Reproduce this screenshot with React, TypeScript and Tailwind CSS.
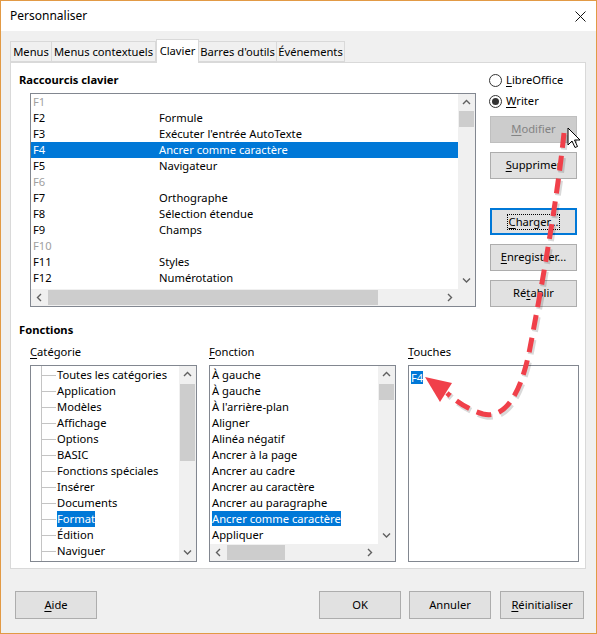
import React from 'react'

const Mn = ({ children }: { children: React.ReactNode }) => (
  <span className="underline underline-offset-[2px] decoration-1">{children}</span>
)

function Chevron({ dir }: { dir: 'up' | 'down' | 'left' | 'right' }) {
  const d = {
    up: 'M1 5 L4.5 1.5 L8 5',
    down: 'M1 1.5 L4.5 5 L8 1.5',
    left: 'M5 1 L1.5 4.5 L5 8',
    right: 'M2 1 L5.5 4.5 L2 8',
  }[dir]
  const wide = dir === 'up' || dir === 'down'
  return (
    <svg width={wide ? 9 : 7} height={wide ? 7 : 9} viewBox={wide ? '0 0 9 7' : '0 0 7 9'}>
      <path d={d} fill="none" stroke="#606060" strokeWidth="1.4" />
    </svg>
  )
}

function VScroll({ thumbTop, thumbH }: { thumbTop: number; thumbH: number }) {
  return (
    <div className="w-[17px] h-full bg-[#f0f0f0] flex flex-col shrink-0">
      <div className="h-[17px] flex items-center justify-center shrink-0"><Chevron dir="up" /></div>
      <div className="flex-1 relative">
        <div className="absolute left-px right-px bg-[#cdcdcd]" style={{ top: thumbTop, height: thumbH }} />
      </div>
      <div className="h-[17px] flex items-center justify-center shrink-0"><Chevron dir="down" /></div>
    </div>
  )
}

function HScroll({ thumbLeft, thumbW }: { thumbLeft: number; thumbW: number }) {
  return (
    <div className="h-[17px] w-full bg-[#f0f0f0] flex shrink-0">
      <div className="flex-1 flex">
        <div className="w-[17px] flex items-center justify-center shrink-0"><Chevron dir="left" /></div>
        <div className="flex-1 relative">
          <div className="absolute top-px bottom-px bg-[#cdcdcd]" style={{ left: thumbLeft, width: thumbW }} />
        </div>
        <div className="w-[17px] flex items-center justify-center shrink-0"><Chevron dir="right" /></div>
      </div>
      <div className="w-[17px] shrink-0" />
    </div>
  )
}

function Btn({ children, w = 'w-[87px]', h = 'h-[27px]', disabled, focused }: { children: React.ReactNode; w?: string; h?: string; disabled?: boolean; focused?: boolean }) {
  return (
    <div
      className={`${w} ${h} flex items-center justify-center whitespace-nowrap border ${
        disabled
          ? 'bg-[#cccccc] border-[#bfbfbf] text-[#838383]'
          : focused
          ? 'bg-[#e1e1e1] border-[#0078d7] shadow-[inset_0_0_0_1px_#0078d7] text-black'
          : 'bg-[#e1e1e1] border-[#adadad] text-black'
      }`}
    >
      {focused ? <span className="outline outline-1 outline-dotted outline-black px-px leading-[14px]">{children}</span> : children}
    </div>
  )
}

function Radio({ checked, children }: { checked?: boolean; children: React.ReactNode }) {
  return (
    <div className="h-[16px] flex items-center gap-[4px]">
      <div className="w-[13px] h-[13px] rounded-full border border-[#333] bg-white flex items-center justify-center">
        {checked && <div className="w-[7px] h-[7px] rounded-full bg-[#333]" />}
      </div>
      <span>{children}</span>
    </div>
  )
}

const shortcuts: [string, string, boolean?][] = [
  ['F1', '', true],
  ['F2', 'Formule'],
  ['F3', "Exécuter l'entrée AutoTexte"],
  ['F4', 'Ancrer comme caractère'],
  ['F5', 'Navigateur'],
  ['F6', '', true],
  ['F7', 'Orthographe'],
  ['F8', 'Sélection étendue'],
  ['F9', 'Champs'],
  ['F10', '', true],
  ['F11', 'Styles'],
  ['F12', 'Numérotation'],
  ['F13', ''],
]

const categories = [
  'Toutes les catégories',
  'Application',
  'Modèles',
  'Affichage',
  'Options',
  'BASIC',
  'Fonctions spéciales',
  'Insérer',
  'Documents',
  'Format',
  'Édition',
  'Naviguer',
]

const fonctions = [
  'À gauche',
  'À gauche',
  "À l'arrière-plan",
  'Aligner',
  'Alinéa négatif',
  'Ancrer à la page',
  'Ancrer au cadre',
  'Ancrer au caractère',
  'Ancrer au paragraphe',
  'Ancrer comme caractère',
  'Appliquer',
]

const tabs = [
  { label: 'Menus', w: 'w-[42px]' },
  { label: 'Menus contextuels', w: 'w-[105px]' },
  { label: 'Clavier', w: 'w-[43px]', active: true },
  { label: "Barres d'outils", w: 'w-[79px]' },
  { label: 'Événements', w: 'w-[69px]' },
]

export default function App() {
  return (
    <div className="relative w-[597px] h-[634px] bg-[#f0f0f0] border border-[#e29a45] flex flex-col text-black font-['Noto_Sans',sans-serif] text-[11.2px] overflow-hidden">
      {/* title bar */}
      <div className="h-[30px] bg-white flex items-center pl-[9px] pr-[10px] shrink-0">
        <span className="text-[12px]">Personnaliser</span>
        <svg className="ml-auto" width="11" height="11" viewBox="0 0 11 11">
          <path d="M0.5 0.5 L10.5 10.5 M10.5 0.5 L0.5 10.5" stroke="#111" strokeWidth="1" />
        </svg>
      </div>

      {/* tabs */}
      <div className="flex items-end pl-[9px] mt-[8px] h-[23px] shrink-0 relative z-10">
        {tabs.map((t) =>
          t.active ? (
            <div key={t.label} className={`${t.w} h-[24px] -mb-px bg-white border border-b-0 border-[#d9d9d9] flex items-center justify-center whitespace-nowrap`}>
              {t.label}
            </div>
          ) : (
            <div key={t.label} className={`${t.w} h-[21px] pt-[2px] bg-[#f0f0f0] border border-[#d9d9d9] -ml-px first:ml-0 flex items-center justify-center whitespace-nowrap`}>
              {t.label}
            </div>
          )
        )}
      </div>

      {/* panel */}
      <div className="ml-[9px] w-[576px] h-[507px] bg-white border border-[#d9d9d9] shrink-0 flex flex-col pt-[9px] pl-[8px]">
        <div className="flex">
          <div className="flex flex-col">
            <div className="h-[16px] leading-[16px] font-bold">Raccourcis clavier</div>
            <div className="ml-[11px] mt-[5px] w-[446px] h-[214px] border border-[#828790] bg-white flex flex-col">
              <div className="flex flex-1 min-h-0">
                <div className="flex-1 overflow-hidden">
                  {shortcuts.map(([k, f, dim]) => (
                    <div
                      key={k}
                      className={`h-[16px] leading-[16px] flex pl-[2px] whitespace-nowrap ${
                        k === 'F4' ? 'bg-[#0078d7] text-white' : dim ? 'text-[#a0a0a0]' : ''
                      }`}
                    >
                      <span className="w-[126px]">{k}</span>
                      <span>{f}</span>
                    </div>
                  ))}
                </div>
                <VScroll thumbTop={0} thumbH={16} />
              </div>
              <HScroll thumbLeft={0} thumbW={330} />
            </div>
          </div>
          <div className="ml-[13px] flex flex-col">
            <Radio><Mn>L</Mn>ibreOffice</Radio>
            <div className="mt-[5px]"><Radio checked><Mn>W</Mn>riter</Radio></div>
            <div className="mt-[7px] ml-px flex flex-col gap-[9px]">
              <Btn disabled><Mn>M</Mn>odifier</Btn>
              <Btn><Mn>S</Mn>upprimer</Btn>
              <div className="h-[11px]" />
              <Btn focused><Mn>C</Mn>harger...</Btn>
              <Btn><Mn>E</Mn>nregistrer...</Btn>
              <Btn>Ré<Mn>t</Mn>ablir</Btn>
            </div>
          </div>
        </div>

        <div className="mt-[15px] h-[16px] leading-[16px] font-bold">Fonctions</div>

        <div className="mt-[6px] ml-[11px] flex gap-[12px]">
          <div className="flex flex-col">
            <div className="h-[16px] leading-[16px]"><Mn>C</Mn>atégorie</div>
            <div className="mt-[5px] w-[167px] h-[197px] border border-[#828790] bg-white flex">
              <div className="flex-1 relative overflow-hidden pt-[1px]">
                <div className="absolute left-[10px] top-0 bottom-0 border-l border-[#c4c4c4]" />
                {categories.map((c) => (
                  <div key={c} className="h-[16px] leading-[16px] flex items-center whitespace-nowrap">
                    <div className="ml-[10px] w-[15px] border-t border-[#c4c4c4] shrink-0" />
                    <span className={`ml-[1px] ${c === 'Format' ? 'bg-[#0078d7] text-white' : ''}`}>{c}</span>
                  </div>
                ))}
              </div>
              <VScroll thumbTop={1} thumbH={77} />
            </div>
          </div>

          <div className="flex flex-col">
            <div className="h-[16px] leading-[16px]"><Mn>F</Mn>onction</div>
            <div className="mt-[5px] w-[187px] h-[197px] border border-[#828790] bg-white flex flex-col">
              <div className="flex flex-1 min-h-0">
                <div className="flex-1 overflow-hidden pl-[2px] pt-[1px]">
                  {fonctions.map((f, i) => (
                    <div key={i} className="h-[16px] leading-[16px] whitespace-nowrap">
                      <span className={f === 'Ancrer comme caractère' ? 'bg-[#0078d7] text-white' : ''}>{f}</span>
                    </div>
                  ))}
                </div>
                <VScroll thumbTop={1} thumbH={16} />
              </div>
              <HScroll thumbLeft={0} thumbW={58} />
            </div>
          </div>

          <div className="flex flex-col">
            <div className="h-[16px] leading-[16px]"><Mn>T</Mn>ouches</div>
            <div className="mt-[5px] w-[171px] h-[197px] border border-[#828790] bg-white pl-[2px] pt-[4px]">
              <span className="bg-[#0078d7] text-white leading-[13px] inline-block">F4</span>
            </div>
          </div>
        </div>
      </div>

      {/* bottom buttons */}
      <div className="mt-[22px] flex pl-[14px] pr-[12px]">
        <Btn w="w-[82px]" h="h-[28px]"><Mn>A</Mn>ide</Btn>
        <div className="ml-auto flex gap-[8px]">
          <Btn w="w-[82px]" h="h-[28px]">OK</Btn>
          <Btn w="w-[82px]" h="h-[28px]">Annuler</Btn>
          <div className="ml-px">
            <Btn w="w-[84px]" h="h-[28px]"><Mn>R</Mn>éinitialiser</Btn>
          </div>
        </div>
      </div>

      {/* annotation arrow */}
      <svg className="absolute inset-0 pointer-events-none" width="597" height="634" viewBox="0 0 597 634">
        <path
          d="M563 132 C556 200 540 290 528 352 C518 398 502 418 482 413 C468 409 456 401 446 392"
          fill="none"
          stroke="#000"
          strokeOpacity="0.15"
          strokeWidth="6"
          strokeDasharray="15 8"
          transform="translate(1.5 2)"
        />
        <path
          d="M563 132 C556 200 540 290 528 352 C518 398 502 418 482 413 C468 409 456 401 446 392"
          fill="none"
          stroke="#f0404a"
          strokeWidth="5"
          strokeDasharray="15 8"
        />
        <polygon points="424,376 451,382 439,401" fill="#f0404a" />
        <g transform="translate(567 127)">
          <path d="M0 0 L0 17 L4 13 L7 19.5 L9.5 18.5 L6.5 12 L12 12 Z" fill="#fff" stroke="#000" strokeWidth="1" strokeLinejoin="round" />
        </g>
      </svg>
    </div>
  )
}
